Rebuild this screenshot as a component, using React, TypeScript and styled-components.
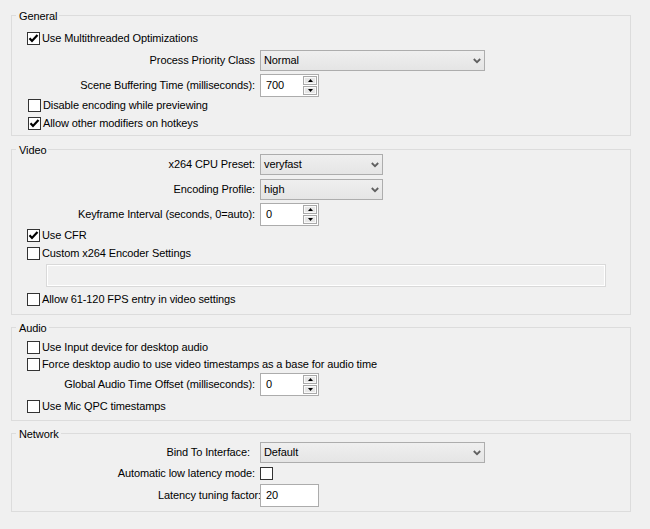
import React from "react";
import styled, { createGlobalStyle } from "styled-components";

const GlobalStyle = createGlobalStyle`
  html, body {
    margin: 0;
    padding: 0;
    background: #f0f0f0;
  }
  body {
    font-family: "Liberation Sans", Arial, sans-serif;
    font-size: 11px;
    line-height: 13px;
    letter-spacing: -0.1px;
    color: #000;
  }
`;

const Page = styled.div`
  width: 650px;
  height: 529px;
  box-sizing: border-box;
  padding: 15px 0 0 11px;
  display: flex;
  flex-direction: column;
`;

const Group = styled.section<{ $mt: number; $pb: number }>`
  width: 620px;
  box-sizing: border-box;
  margin-top: ${({ $mt }) => $mt}px;
  padding-bottom: ${({ $pb }) => $pb}px;
  border: 1px solid #dcdcdc;
  display: flex;
  flex-direction: column;
`;

const GroupTitle = styled.div`
  align-self: flex-start;
  height: 13px;
  margin: -6px 0 -7px 4px;
  padding: 0 2px 0 3px;
  background: #f0f0f0;
`;

const CheckRow = styled.label<{ $mt?: number; $indent?: number }>`
  display: flex;
  align-items: center;
  gap: 2px;
  height: 17px;
  margin-top: ${({ $mt }) => $mt ?? 0}px;
  padding-left: ${({ $indent }) => $indent ?? 15}px;
  white-space: nowrap;
`;

const Box = styled.span`
  flex: none;
  width: 13px;
  height: 13px;
  box-sizing: border-box;
  border: 1px solid #333333;
  background: #ffffff;
  display: flex;
  align-items: center;
  justify-content: center;
`;

const FormRow = styled.div<{ $mt?: number }>`
  display: grid;
  grid-template-columns: 243px max-content;
  column-gap: 5px;
  align-items: center;
  margin-top: ${({ $mt }) => $mt ?? 0}px;
`;

const Label = styled.span<{ $shift?: number }>`
  text-align: right;
  white-space: nowrap;
  margin-right: ${({ $shift }) => $shift ?? 0}px;
`;

const Combo = styled.div<{ $w: number }>`
  width: ${({ $w }) => $w}px;
  height: 21px;
  box-sizing: border-box;
  border: 1px solid #adadad;
  background: linear-gradient(#efefef, #e5e5e5);
  display: flex;
  align-items: center;
  justify-content: space-between;
  padding: 0 3px 0 3px;
`;

const Spin = styled.div`
  width: 59px;
  height: 23px;
  box-sizing: border-box;
  border: 1px solid #acacac;
  background: #ffffff;
  display: flex;
  align-items: center;
  padding: 0 1px 0 5px;
`;

const SpinValue = styled.span`
  flex: 1;
`;

const SpinButtons = styled.div`
  display: flex;
  flex-direction: column;
  gap: 1px;
`;

const SpinButton = styled.span`
  width: 14px;
  height: 9px;
  box-sizing: border-box;
  border: 1px solid #a9a9a9;
  background: #e6e6e6;
  box-shadow: inset 0 0 0 1px #fafafa;
  display: flex;
  align-items: center;
  justify-content: center;
`;

const TextBox = styled.div`
  width: 59px;
  height: 23px;
  box-sizing: border-box;
  border: 1px solid #acacac;
  background: #ffffff;
  display: flex;
  align-items: center;
  padding-left: 5px;
`;

const DisabledEdit = styled.div<{ $mt?: number }>`
  width: 560px;
  height: 23px;
  box-sizing: border-box;
  margin: ${({ $mt }) => $mt ?? 0}px 0 0 34px;
  border: 1px solid #d9d9d9;
  box-shadow: inset 0 0 0 1px #ffffff;
  background: #f0f0f0;
`;

const Check = () => (
  <svg width="11" height="11" viewBox="0 0 11 11">
    <path d="M1.5 5.2 L4 7.9 L9.5 1.9" fill="none" stroke="#000" strokeWidth="2.2" />
  </svg>
);

const Chevron = () => (
  <svg width="8" height="6" viewBox="0 0 8 6">
    <polyline points="0.8,1 4,4.2 7.2,1" fill="none" stroke="#606060" strokeWidth="1.8" />
  </svg>
);

const Arrow: React.FC<{ up?: boolean }> = ({ up }) => (
  <svg width="5" height="3" viewBox="0 0 5 3">
    <polygon points={up ? "0,3 5,3 2.5,0" : "0,0 5,0 2.5,3"} fill="#000" />
  </svg>
);

const CheckBox: React.FC<{
  text: string;
  checked?: boolean;
  mt?: number;
  indent?: number;
}> = ({ text, checked, mt, indent }) => (
  <CheckRow $mt={mt} $indent={indent}>
    <Box>{checked && <Check />}</Box>
    <span>{text}</span>
  </CheckRow>
);

const ComboField: React.FC<{ label: string; value: string; w: number; mt?: number; shift?: number }> = ({
  label,
  value,
  w,
  mt,
  shift,
}) => (
  <FormRow $mt={mt}>
    <Label $shift={shift}>{label}</Label>
    <Combo $w={w}>
      <span>{value}</span>
      <Chevron />
    </Combo>
  </FormRow>
);

const SpinField: React.FC<{ label: string; value: string; mt?: number }> = ({ label, value, mt }) => (
  <FormRow $mt={mt}>
    <Label>{label}</Label>
    <Spin>
      <SpinValue>{value}</SpinValue>
      <SpinButtons>
        <SpinButton>
          <Arrow up />
        </SpinButton>
        <SpinButton>
          <Arrow />
        </SpinButton>
      </SpinButtons>
    </Spin>
  </FormRow>
);

const App: React.FC = () => (
  <Page>
    <GlobalStyle />

    <Group $mt={0} $pb={3}>
      <GroupTitle>General</GroupTitle>
      <CheckBox text="Use Multithreaded Optimizations" checked mt={14} />
      <ComboField label="Process Priority Class" value="Normal" w={225} mt={3} />
      <SpinField label="Scene Buffering Time (milliseconds):" value="700" mt={3} />
      <CheckBox text="Disable encoding while previewing" indent={16} />
      <CheckBox text="Allow other modifiers on hotkeys" checked indent={16} mt={1} />
    </Group>

    <Group $mt={13} $pb={6}>
      <GroupTitle>Video</GroupTitle>
      <ComboField label="x264 CPU Preset:" value="veryfast" w={123} mt={4} />
      <ComboField label="Encoding Profile:" value="high" w={123} mt={4} />
      <SpinField label="Keyframe Interval (seconds, 0=auto):" value="0" mt={3} />
      <CheckBox text="Use CFR" checked mt={1} />
      <CheckBox text="Custom x264 Encoder Settings" mt={1} />
      <DisabledEdit $mt={2} />
      <CheckBox text="Allow 61-120 FPS entry in video settings" mt={4} />
    </Group>

    <Group $mt={12} $pb={5}>
      <GroupTitle>Audio</GroupTitle>
      <CheckBox text="Use Input device for desktop audio" mt={11} />
      <CheckBox text="Force desktop audio to use video timestamps as a base for audio time" />
      <SpinField label="Global Audio Time Offset (milliseconds):" value="0" />
      <CheckBox text="Use Mic QPC timestamps" mt={2} />
    </Group>

    <Group $mt={12} $pb={4}>
      <GroupTitle>Network</GroupTitle>
      <ComboField label="Bind To Interface:" value="Default" w={225} mt={8} shift={5} />
      <FormRow $mt={4}>
        <Label>Automatic low latency mode:</Label>
        <Box />
      </FormRow>
      <FormRow $mt={4}>
        <Label $shift={-6}>Latency tuning factor:</Label>
        <TextBox>20</TextBox>
      </FormRow>
    </Group>
  </Page>
);

export default App;
